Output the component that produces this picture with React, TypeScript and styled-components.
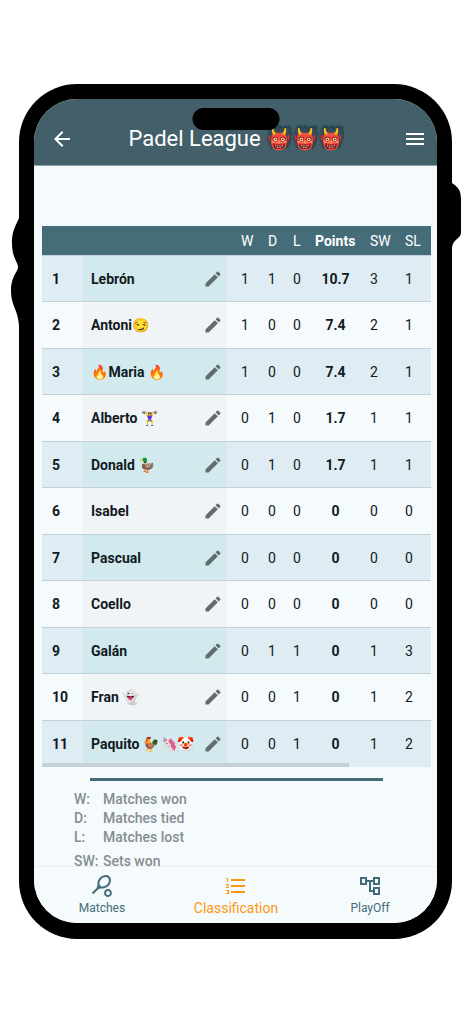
import React from 'react';
import styled, { createGlobalStyle } from 'styled-components';
import {
  MdArrowBack,
  MdEdit,
  MdFormatListNumbered,
  MdMenu,
  MdOutlineAccountTree,
  MdSportsTennis,
} from 'react-icons/md';

const colors = {
  bar: '#435f6a',
  brand: '#456d79',
  surface: '#f5fafd',
  rowTint: '#e0ecf3',
  nameTint: '#d2eaee',
  namePlain: '#f0f4f7',
  line: '#c4d1d9',
  accent: '#ff9810',
};

const GlobalStyle = createGlobalStyle`
  *, *::before, *::after { box-sizing: border-box; }
  body {
    margin: 0;
    background: #fff;
    color: #101a1f;
    font-family: Roboto, "Noto Color Emoji", sans-serif;
  }
`;

const Stage = styled.div`
  display: flex;
  height: 100vh;
  padding: 84px 21px 85px 19px;
`;

const Phone = styled.div`
  position: relative;
  display: flex;
  flex: 1;
  min-width: 0;
  padding: 15px 15px 16px;
  border-radius: 58px;
  background: #000;
`;

const SideKeys = styled.svg<{ $side: 'left' | 'right' }>`
  position: absolute;
  top: ${(p) => (p.$side === 'left' ? 130 : 98)}px;
  ${(p) => p.$side}: ${(p) => (p.$side === 'left' ? -8 : -10)}px;
`;

const Island = styled.div`
  position: absolute;
  top: 24px;
  left: 50%;
  width: 87px;
  height: 22px;
  border-radius: 11px;
  background: #000;
  transform: translateX(-50%);
`;

const Screen = styled.div`
  display: flex;
  flex: 1;
  flex-direction: column;
  min-width: 0;
  overflow: hidden;
  border-radius: 43px;
  background: ${colors.surface};
`;

const AppBar = styled.header`
  display: flex;
  flex: none;
  align-items: center;
  justify-content: space-between;
  height: 67px;
  padding: 13px 10px 0 16px;
  border-bottom: 1px solid #8ba0aa;
  background: ${colors.bar};
  color: #fff;
`;

const IconButton = styled.button`
  display: flex;
  padding: 0;
  border: 0;
  background: none;
  color: inherit;
  cursor: pointer;
`;

const Title = styled.h1`
  margin: 0;
  padding-right: 4px;
  font-size: 22px;
  font-weight: 400;
  line-height: 28px;
  white-space: nowrap;
`;

const Emblem = styled.span`
  font-size: 21px;
  text-shadow: 1px -2px 1px #1f4350;
`;

const Content = styled.main`
  flex: 1;
  min-height: 0;
  overflow: hidden;
  padding: 60px 6px 0 8px;
`;

const Standings = styled.table`
  width: 100%;
  table-layout: fixed;
  border-collapse: separate;
  border-spacing: 0;
  font-size: 14px;
  line-height: 20px;
`;

const HeadCell = styled.th<{ $width?: number; $strong?: boolean }>`
  width: ${(p) => (p.$width ? `${p.$width}px` : 'auto')};
  height: 30px;
  padding: 0 0 0 14px;
  border-bottom: 1px solid ${colors.line};
  background: ${colors.brand};
  color: #fff;
  font-weight: ${(p) => (p.$strong ? 700 : 400)};
  text-align: left;
  white-space: nowrap;
`;

const Cell = styled.td<{ $strong?: boolean }>`
  padding: 0 0 0 14px;
  border-bottom: 1px solid ${colors.line};
  font-weight: ${(p) => (p.$strong ? 700 : 400)};
  text-align: ${(p) => (p.$strong ? 'center' : 'left')};
`;

const RankCell = styled.th`
  padding: 0 0 0 10px;
  border-bottom: 1px solid ${colors.line};
  font-weight: 700;
  text-align: left;
`;

const NameCell = styled.td`
  padding: 0 4px 0 8px;
  border-bottom: 1px solid ${colors.line};
  background: ${colors.namePlain};
`;

const Row = styled.tr`
  height: 47px;

  &:nth-child(odd) {
    height: 46px;
    background: ${colors.rowTint};
  }

  &:nth-child(odd) ${NameCell} {
    background: ${colors.nameTint};
  }

  &:last-child > * {
    border-bottom: 0;
  }
`;

const Player = styled.div`
  display: flex;
  align-items: center;
  justify-content: space-between;
  font-weight: 700;
  white-space: nowrap;
`;

const EditButton = styled(IconButton)`
  color: #626b6f;
`;

const ScrollArea = styled.div`
  position: relative;
`;

const ScrollThumb = styled.div`
  position: absolute;
  bottom: 0;
  left: 0;
  width: 79%;
  height: 4px;
  background: #c5d1d7;
`;

const Divider = styled.hr`
  height: 3px;
  margin: 11px 48px 0;
  border: 0;
  background: ${colors.brand};
`;

const Legend = styled.dl`
  display: grid;
  grid-template-columns: 29px 1fr;
  margin: 9px 0 0 32px;
  color: #868d90;
  font-size: 14px;
  font-weight: 500;
  line-height: 19px;
`;

const Term = styled.dt<{ $group?: boolean }>`
  padding-top: ${(p) => (p.$group ? 5 : 0)}px;
  white-space: nowrap;
`;

const Meaning = styled.dd<{ $group?: boolean }>`
  margin: 0;
  padding-top: ${(p) => (p.$group ? 5 : 0)}px;
`;

const TabBar = styled.nav`
  display: grid;
  flex: none;
  grid-template-columns: repeat(3, 1fr);
  height: 57px;
  padding-left: 1px;
  border-top: 1px solid #e9eef1;
  background: ${colors.surface};
`;

const Tab = styled.a<{ $active?: boolean }>`
  display: flex;
  flex-direction: column;
  align-items: center;
  padding-top: 7px;
  color: ${(p) => (p.$active ? colors.accent : colors.brand)};
  font-size: ${(p) => (p.$active ? 14 : 12)}px;
  line-height: 20px;
  text-decoration: none;
`;

type Standing = [string, number, number, number, string, number, number];

const standings: Standing[] = [
  ['Lebrón', 1, 1, 0, '10.7', 3, 1],
  ['Antoni😏', 1, 0, 0, '7.4', 2, 1],
  ['🔥Maria 🔥', 1, 0, 0, '7.4', 2, 1],
  ['Alberto 🏋️‍♀️', 0, 1, 0, '1.7', 1, 1],
  ['Donald 🦆', 0, 1, 0, '1.7', 1, 1],
  ['Isabel', 0, 0, 0, '0', 0, 0],
  ['Pascual', 0, 0, 0, '0', 0, 0],
  ['Coello', 0, 0, 0, '0', 0, 0],
  ['Galán', 0, 1, 1, '0', 1, 3],
  ['Fran 👻', 0, 0, 1, '0', 1, 2],
  ['Paquito 🐓🦄🤡', 0, 0, 1, '0', 1, 2],
];

const legend = [
  { term: 'W:', meaning: 'Matches won' },
  { term: 'D:', meaning: 'Matches tied' },
  { term: 'L:', meaning: 'Matches lost' },
  { term: 'SW:', meaning: 'Sets won', group: true },
];

export default function App() {
  return (
    <>
      <GlobalStyle />
      <Stage>
        <Phone>
          <SideKeys $side="left" width="9" height="112" viewBox="0 0 9 112" aria-hidden="true">
            <path d="M9 0C8 8 1 13 1 29C1 44 7 48 7 53C7 58 0 62 0 77C0 92 7 95 8 112H9Z" />
          </SideKeys>
          <SideKeys $side="right" width="11" height="72" viewBox="0 0 11 72" aria-hidden="true">
            <path d="M0 0C4 4 10 5 10 17V50C10 58 1 56 1 68L0 72Z" />
          </SideKeys>
          <Screen>
            <AppBar>
              <IconButton aria-label="Back"><MdArrowBack size={24} /></IconButton>
              <Title>Padel League <Emblem>👹👹👹</Emblem></Title>
              <IconButton aria-label="Menu"><MdMenu size={24} /></IconButton>
            </AppBar>
            <Content>
              <ScrollArea>
                <Standings>
                  <thead>
                    <tr>
                      <HeadCell $width={41} aria-label="Position" />
                      <HeadCell aria-label="Player" />
                      <HeadCell $width={27}>W</HeadCell>
                      <HeadCell $width={25}>D</HeadCell>
                      <HeadCell $width={22}>L</HeadCell>
                      <HeadCell $width={55} $strong>Points</HeadCell>
                      <HeadCell $width={35}>SW</HeadCell>
                      <HeadCell $width={40}>SL</HeadCell>
                    </tr>
                  </thead>
                  <tbody>
                    {standings.map(([name, won, tied, lost, points, setsWon, setsLost], i) => (
                      <Row key={name}>
                        <RankCell scope="row">{i + 1}</RankCell>
                        <NameCell>
                          <Player>
                            {name}
                            <EditButton aria-label={`Edit ${name}`}><MdEdit size={20} /></EditButton>
                          </Player>
                        </NameCell>
                        <Cell>{won}</Cell>
                        <Cell>{tied}</Cell>
                        <Cell>{lost}</Cell>
                        <Cell $strong>{points}</Cell>
                        <Cell>{setsWon}</Cell>
                        <Cell>{setsLost}</Cell>
                      </Row>
                    ))}
                  </tbody>
                </Standings>
                <ScrollThumb />
              </ScrollArea>
              <Divider />
              <Legend>
                {legend.map(({ term, meaning, group }) => (
                  <React.Fragment key={term}>
                    <Term $group={group}>{term}</Term>
                    <Meaning $group={group}>{meaning}</Meaning>
                  </React.Fragment>
                ))}
              </Legend>
            </Content>
            <TabBar>
              <Tab href="#matches"><MdSportsTennis size={24} />Matches</Tab>
              <Tab href="#classification" $active aria-current="page">
                <MdFormatListNumbered size={24} />Classification
              </Tab>
              <Tab href="#playoff"><MdOutlineAccountTree size={24} />PlayOff</Tab>
            </TabBar>
          </Screen>
          <Island />
        </Phone>
      </Stage>
    </>
  );
}
